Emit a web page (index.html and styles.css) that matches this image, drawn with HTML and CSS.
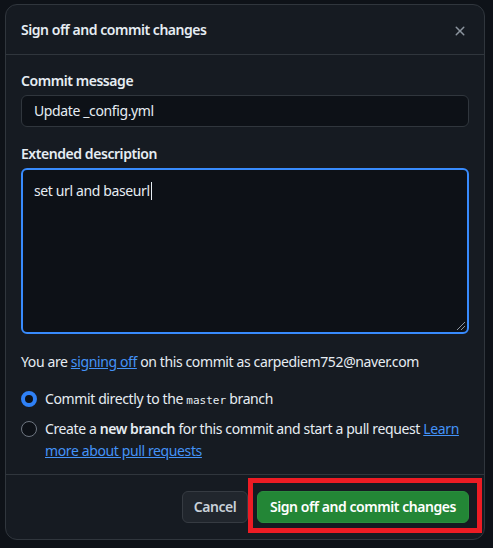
FILE: index.html
```html
<!DOCTYPE html>
<html>
<head>
<meta charset="utf-8">
<link rel="stylesheet" href="styles.css">
</head>
<body>
<div class="page">
  <div class="dialog">
    <div class="header">
      <h1 class="title">Sign off and commit changes</h1>
      <span class="close" aria-label="Close">
        <svg width="16" height="16" viewBox="0 0 16 16"><path d="M3.72 3.72a.75.75 0 0 1 1.06 0L8 6.94l3.22-3.22a.75.75 0 1 1 1.06 1.06L9.06 8l3.22 3.22a.75.75 0 1 1-1.06 1.06L8 9.06l-3.22 3.22a.75.75 0 0 1-1.06-1.06L6.94 8 3.72 4.78a.75.75 0 0 1 0-1.06Z" fill="#8b949e"/></svg>
      </span>
    </div>
    <div class="body">
      <label class="label">Commit message</label>
      <div class="input">Update _config.yml</div>
      <label class="label label-gap">Extended description</label>
      <div class="textarea">set url and baseurl<span class="caret"></span>
        <span class="resize"></span>
      </div>
      <p class="signoff">You are <a class="link">signing off</a> on this commit as carpediem752@naver.com</p>
      <div class="radios">
        <div class="radio-row">
          <span class="radio checked"></span>
          <div class="radio-text">Commit directly to the <code>master</code> branch</div>
        </div>
        <div class="radio-row">
          <span class="radio"></span>
          <div class="radio-text">Create a <b>new branch</b> for this commit and start a pull request <a class="link">Learn</a> <a class="link">more about pull requests</a></div>
        </div>
      </div>
    </div>
    <div class="footer">
      <button class="btn cancel">Cancel</button>
      <button class="btn primary">Sign off and commit changes</button>
      <span class="highlight"></span>
    </div>
  </div>
</div>
</body>
</html>
```

FILE: styles.css
```css
* { box-sizing: border-box; }
html, body {
  margin: 0;
  padding: 0;
  background: #0e1218;
  font-family: "Noto Sans", "Segoe UI", sans-serif;
  color: #e6edf3;
  font-size: 14px;
  letter-spacing: -0.38px;
}
.page {
  width: 493px;
  height: 548px;
  padding: 4px 8px 8px 5px;
  position: relative;
  overflow: hidden;
}
.dialog {
  width: 480px;
  height: 536px;
  background: #161b22;
  border: 1px solid #30363d;
  border-radius: 12px;
  display: flex;
  flex-direction: column;
}
.header {
  height: 50px;
  border-bottom: 1px solid #30363d;
  display: flex;
  align-items: center;
  justify-content: space-between;
  padding: 0 16px 0 15px;
}
.title {
  margin: 0;
  font-size: 14px;
  font-weight: 600;
  line-height: 20px;
  padding-top: 1px;
  letter-spacing: -0.46px;
}
.close {
  display: flex;
  width: 16px;
  height: 16px;
  margin-top: 2px;
}
.body {
  padding: 16px 15px 0 15px;
  flex: 1;
  display: flex;
  flex-direction: column;
}
.label {
  display: block;
  font-weight: 600;
  line-height: 20px;
  margin-bottom: 4px;
  letter-spacing: -0.44px;
}
.label-gap { margin-top: 17px; }
.input {
  height: 32px;
  background: #0d1117;
  border: 1px solid #30363d;
  border-radius: 6px;
  padding: 0 12px;
  line-height: 30px;
}
.textarea {
  position: relative;
  height: 166px;
  background: #0d1117;
  border: 2px solid #388bfd;
  border-radius: 6px;
  padding: 11px 11px;
  line-height: 20px;
}
.caret {
  display: inline-block;
  width: 1px;
  height: 18px;
  background: #e6edf3;
  vertical-align: -4px;
  margin-left: 1px;
}
.resize {
  position: absolute;
  right: 2px;
  bottom: 2px;
  width: 8px;
  height: 8px;
  background: linear-gradient(135deg, transparent 45%, #8b949e 45%, #8b949e 55%, transparent 55%, transparent 70%, #8b949e 70%, #8b949e 80%, transparent 80%);
}
.signoff {
  margin: 18px 0 0 0;
  line-height: 20px;
}
.link {
  color: #4493f8;
  text-decoration: underline;
}
.radios {
  margin-top: 16px;
  display: flex;
  flex-direction: column;
  gap: 6px;
}
.radio-row {
  display: flex;
  align-items: flex-start;
  gap: 8px;
  line-height: 22px;
}
.radio {
  flex: none;
  width: 16px;
  height: 16px;
  margin-top: 3px;
  border-radius: 50%;
  border: 1px solid #6e7681;
  background: #0d1117;
}
.radio.checked {
  border: 4px solid #2f81f7;
}
.radio-text { flex: 1; }
code {
  font-family: "DejaVu Sans Mono", "Liberation Mono", monospace;
  font-size: 11px;
  letter-spacing: 0;
}
b { font-weight: 600; letter-spacing: -0.44px; }
.footer {
  position: relative;
  border-top: 1px solid #30363d;
  padding: 16px 15px 16px 15px;
  display: flex;
  justify-content: flex-end;
  gap: 9px;
}
.btn {
  height: 32px;
  border-radius: 6px;
  font-family: inherit;
  font-size: 14px;
  font-weight: 600;
  line-height: 30px;
  letter-spacing: -0.44px;
}
.cancel {
  background: #21262d;
  border: 1px solid #363b42;
  color: #c9d1d9;
  width: 66px;
  padding: 0;
}
.primary {
  background: #238636;
  border: 1px solid #2a8d3d;
  color: #ffffff;
  width: 212px;
  padding: 0;
}
.highlight {
  position: absolute;
  left: 242px;
  top: 3px;
  width: 234px;
  height: 55px;
  border: 5px solid #ed1c24;
  pointer-events: none;
}
```
